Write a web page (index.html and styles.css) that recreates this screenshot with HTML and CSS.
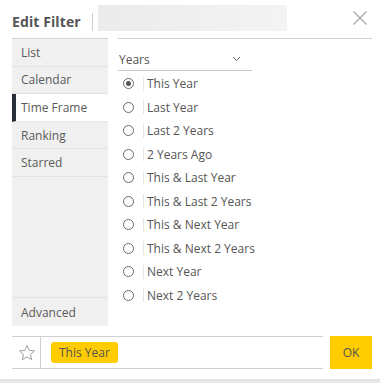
FILE: index.html
```html
<!DOCTYPE html>
<html>
<head>
<meta charset="utf-8">
<link rel="stylesheet" href="styles.css">
</head>
<body>
<div class="panel">
  <div class="header">
    <div class="title">Edit Filter</div>
    <div class="title-sep"></div>
    <div class="search-blur"></div>
    <div class="close">
      <svg width="16" height="16" viewBox="0 0 16 16"><path d="M1.5 1.5 L14.5 14.5 M14.5 1.5 L1.5 14.5" stroke="#a8a8a8" stroke-width="1.3" fill="none"/></svg>
    </div>
  </div>
  <div class="main">
    <div class="sidebar">
      <div class="side-item">List</div>
      <div class="side-item">Calendar</div>
      <div class="side-item active">Time Frame</div>
      <div class="side-item">Ranking</div>
      <div class="side-item">Starred</div>
      <div class="side-fill"></div>
      <div class="side-item last">Advanced</div>
    </div>
    <div class="content">
      <div class="select">
        <span>Years</span>
        <svg class="chev" width="9" height="6" viewBox="0 0 9 6"><path d="M1 1 L4.5 4.5 L8 1" stroke="#666" stroke-width="1" fill="none"/></svg>
      </div>
      <div class="options">
        <div class="opt"><span class="radio checked"></span><span class="opt-sep"></span><span>This Year</span></div>
        <div class="opt"><span class="radio"></span><span class="opt-sep"></span><span>Last Year</span></div>
        <div class="opt"><span class="radio"></span><span class="opt-sep"></span><span>Last 2 Years</span></div>
        <div class="opt"><span class="radio"></span><span class="opt-sep"></span><span>2 Years Ago</span></div>
        <div class="opt"><span class="radio"></span><span class="opt-sep"></span><span>This &amp; Last Year</span></div>
        <div class="opt"><span class="radio"></span><span class="opt-sep"></span><span>This &amp; Last 2 Years</span></div>
        <div class="opt"><span class="radio"></span><span class="opt-sep"></span><span>This &amp; Next Year</span></div>
        <div class="opt"><span class="radio"></span><span class="opt-sep"></span><span>This &amp; Next 2 Years</span></div>
        <div class="opt"><span class="radio"></span><span class="opt-sep"></span><span>Next Year</span></div>
        <div class="opt"><span class="radio"></span><span class="opt-sep"></span><span>Next 2 Years</span></div>
      </div>
    </div>
  </div>
  <div class="footer">
    <div class="summary">
      <div class="star">
        <svg width="18" height="18" viewBox="0 0 18 18"><path d="M9 1.5 L11.2 6.4 L16.5 6.9 L12.5 10.4 L13.7 15.7 L9 12.9 L4.3 15.7 L5.5 10.4 L1.5 6.9 L6.8 6.4 Z" stroke="#a0a0a0" stroke-width="1" fill="none" stroke-linejoin="round"/></svg>
      </div>
      <div class="chip">This Year</div>
    </div>
    <div class="ok">OK</div>
  </div>
</div>
<div class="under"></div>
</body>
</html>
```

FILE: styles.css
```css
* { box-sizing: border-box; }
html, body { margin: 0; padding: 0; }
body {
  width: 380px;
  height: 383px;
  overflow: hidden;
  background: #fff;
  font-family: "Open Sans", "Noto Sans", sans-serif;
  color: #555;
  font-size: 12px;
}
.panel {
  height: 379px;
  background: #fff;
  padding: 0 8px 0 12px;
}
.header {
  height: 38px;
  display: flex;
  align-items: center;
  position: relative;
}
.title {
  font-size: 14px;
  font-weight: 700;
  color: #555;
  margin-top: 5px;
  letter-spacing: 0.1px;
}
.title-sep {
  width: 1px;
  height: 18px;
  background: #ccc;
  margin: 6px 0 0 11px;
}
.search-blur {
  width: 189px;
  height: 26px;
  margin: 0 0 2px 5px;
  background: linear-gradient(90deg, #ebebed, #f1f1f2 70%, #f4f4f4);
}
.close {
  margin-left: auto;
  margin-right: 4px;
  margin-bottom: 3px;
  display: flex;
}
.main {
  display: flex;
  height: 288px;
}
.sidebar {
  width: 96px;
  background: #f0f0f0;
  border-top: 1px solid #d6d6d6;
  display: flex;
  flex-direction: column;
}
.side-item {
  height: 27.6px;
  border-bottom: 1px solid #e2e2e2;
  padding-left: 9px;
  display: flex;
  align-items: center;
  color: #5a5a5a;
  font-size: 12px;
}
.side-item.active {
  background: #fff;
  border-left: 4px solid #2b2e3b;
  padding-left: 5px;
  border-bottom-color: #e8e8e8;
}
.side-fill {
  flex: 1;
  border-bottom: 1px solid #e2e2e2;
}
.side-item.last {
  border-bottom: none;
  height: 28px;
}
.content {
  flex: 1;
  margin-left: 10px;
  border-top: 1px solid #d0d0d0;
}
.select {
  width: 134px;
  height: 32px;
  border-bottom: 1px solid #c8c8c8;
  display: flex;
  align-items: flex-end;
  justify-content: space-between;
  padding: 0 11px 2px 1px;
  color: #555;
  font-size: 12px;
}
.chev { margin-bottom: 6px; }
.options {
  padding-top: 1px;
}
.opt {
  height: 23.5px;
  display: flex;
  align-items: center;
  padding-left: 5px;
  color: #555;
}
.radio {
  width: 11px;
  height: 11px;
  border-radius: 50%;
  border: 1px solid #6a6a6a;
  display: flex;
  align-items: center;
  justify-content: center;
}
.radio.checked::after {
  content: "";
  width: 5px;
  height: 5px;
  border-radius: 50%;
  background: #555;
}
.opt-sep {
  width: 1px;
  height: 14px;
  background: #e6e6e6;
  margin: 0 3px 0 9px;
}
.footer {
  margin-top: 10px;
  display: flex;
  gap: 7px;
}
.summary {
  flex: 1;
  height: 33px;
  border-top: 1px solid #cfcfcf;
  border-bottom: 1px solid #cfcfcf;
  display: flex;
  align-items: center;
}
.star {
  width: 29px;
  height: 31px;
  border-right: 1px solid #cfcfcf;
  display: flex;
  align-items: center;
  justify-content: center;
  padding-left: 1px;
}
.chip {
  margin-left: 10px;
  background: #ffcc00;
  border-radius: 3px;
  height: 21px;
  padding: 0 8px;
  display: flex;
  align-items: center;
  color: #555;
  font-size: 12px;
}
.ok {
  width: 42px;
  height: 33px;
  background: #ffcc00;
  display: flex;
  align-items: center;
  justify-content: center;
  color: #555;
  font-size: 12px;
}
.under {
  height: 4px;
  background: linear-gradient(180deg, #e2e2e2, #ececec);
}
```
